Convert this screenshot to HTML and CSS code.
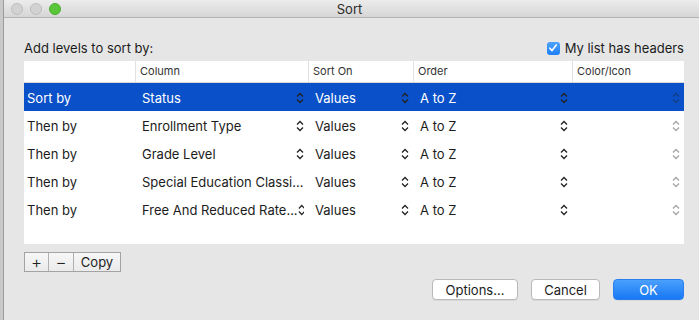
FILE: index.html
```html
<!DOCTYPE html>
<html lang="en">
<head>
  <meta charset="UTF-8" />
  <title>Sort</title>
  <link rel="stylesheet" href="styles.css">
</head>
<body>
  <div class="desk">
    <div class="sheet-edge"></div>
    <div class="window">
      <div class="titlebar">
        <div class="lights">
          <span class="light"></span>
          <span class="light"></span>
          <span class="light green"></span>
        </div>
        <div class="title">Sort</div>
      </div>

      <div class="content">
        <div class="top-row">
          <span>Add levels to sort by:</span>
          <label class="check">
            <span class="box">
              <svg width="10" height="10" viewBox="0 0 10 10"><path d="M1.8 5.2 L4 7.6 L8.3 2" fill="none" stroke="#fff" stroke-width="1.6" stroke-linecap="round" stroke-linejoin="round"/></svg>
            </span>
            My list has headers
          </label>
        </div>

        <div class="table">
          <div class="row head">
            <div class="cell"></div>
            <div class="cell sep">Column</div>
            <div class="cell sep">Sort On</div>
            <div class="cell sep">Order</div>
            <div class="cell sep">Color/Icon</div>
          </div>

          <div class="row selected">
            <div class="cell first">Sort by</div>
            <div class="cell">Status<i class="updown"></i></div>
            <div class="cell">Values<i class="updown"></i></div>
            <div class="cell">A to Z<i class="updown"></i></div>
            <div class="cell"><i class="updown dim"></i></div>
          </div>
          <div class="row">
            <div class="cell first">Then by</div>
            <div class="cell">Enrollment Type<i class="updown"></i></div>
            <div class="cell">Values<i class="updown"></i></div>
            <div class="cell">A to Z<i class="updown"></i></div>
            <div class="cell"><i class="updown dim"></i></div>
          </div>
          <div class="row">
            <div class="cell first">Then by</div>
            <div class="cell">Grade Level<i class="updown"></i></div>
            <div class="cell">Values<i class="updown"></i></div>
            <div class="cell">A to Z<i class="updown"></i></div>
            <div class="cell"><i class="updown dim"></i></div>
          </div>
          <div class="row">
            <div class="cell first">Then by</div>
            <div class="cell">Special Education Classi...<i class="updown"></i></div>
            <div class="cell">Values<i class="updown"></i></div>
            <div class="cell">A to Z<i class="updown"></i></div>
            <div class="cell"><i class="updown dim"></i></div>
          </div>
          <div class="row">
            <div class="cell first">Then by</div>
            <div class="cell">Free And Reduced Rate...<i class="updown"></i></div>
            <div class="cell">Values<i class="updown"></i></div>
            <div class="cell">A to Z<i class="updown"></i></div>
            <div class="cell"><i class="updown dim"></i></div>
          </div>
        </div>

        <div class="tools">
          <button class="tool plus">+</button>
          <button class="tool minus">−</button>
          <button class="tool copy">Copy</button>
        </div>

        <div class="actions">
          <button class="btn options">Options...</button>
          <button class="btn cancel">Cancel</button>
          <button class="btn primary">OK</button>
        </div>
      </div>
    </div>
  </div>
</body>
</html>
```

FILE: styles.css
```css
body {
  margin: 0;
  font-family: Inter, "Liberation Sans", sans-serif;
  font-size: 13px;
  color: #1c1c1c;
  background: #e6e6e6;
}
.desk {
  display: flex;
  height: 320px;
  overflow: hidden;
}
.sheet-edge {
  width: 3px;
  background: #c9c9c9;
  border-right: 1px solid #9c9c9c;
}
.window {
  flex: 1;
  display: flex;
  flex-direction: column;
  background: #e6e6e6;
}
.titlebar {
  height: 17px;
  position: relative;
  background: linear-gradient(#ececec, #d6d6d6);
  border-bottom: 1px solid #b3b3b3;
  display: flex;
  align-items: center;
  justify-content: center;
}
.lights {
  position: absolute;
  left: 7px;
  top: 3px;
  display: flex;
  gap: 7px;
}
.light {
  width: 10px;
  height: 10px;
  border-radius: 50%;
  background: #d2d2d2;
  border: 1px solid #bdbdbd;
}
.light.green {
  background: #5ac73a;
  border-color: #4aae2c;
}
.title {
  font-size: 13px;
  color: #2a2a2a;
  margin-left: -4px;
}
.content {
  padding: 0 15px 0 20px;
}
.top-row {
  display: flex;
  justify-content: space-between;
  align-items: center;
  height: 24px;
  margin-top: 18px;
}
.check {
  display: flex;
  align-items: center;
  gap: 5px;
}
.box {
  width: 13px;
  height: 13px;
  border-radius: 3px;
  background: linear-gradient(#4ea2fb, #1d7ef6);
  display: flex;
  align-items: center;
  justify-content: center;
}
.table {
  margin-top: 1px;
  height: 183px;
  background: #fff;
}
.row {
  display: grid;
  grid-template-columns: 111px 173px 105px 159px 1fr;
  height: 28px;
  align-items: center;
}
.row.head {
  height: 21px;
  border-bottom: 1px solid #d8d8d8;
  font-size: 11px;
  color: #333;
}
.head .cell {
  height: 21px;
  line-height: 21px;
  padding-top: 0;
}
.head .sep {
  border-left: 1px solid #e2e2e2;
  padding-left: 4px;
}
.row.selected {
  background: #0a51c9;
  color: #fff;
}
.cell {
  display: flex;
  align-items: center;
  padding-left: 7px;
  padding-right: 4px;
  padding-top: 2px;
  white-space: nowrap;
  overflow: hidden;
}
.cell.first {
  padding-left: 3px;
}
.updown {
  margin-left: auto;
  width: 8px;
  height: 12px;
  background: url("data:image/svg+xml,%3Csvg xmlns='http://www.w3.org/2000/svg' width='8' height='12'%3E%3Cpath d='M1 4.5 L4 1.5 L7 4.5 M1 7.5 L4 10.5 L7 7.5' fill='none' stroke='%23222' stroke-width='1.3'/%3E%3C/svg%3E") no-repeat;
}
.updown.dim {
  opacity: 0.4;
}
.tools {
  display: flex;
  margin-top: 8px;
  width: 95px;
  border: 1px solid #a3a3a3;
  height: 18px;
  background: linear-gradient(#f7f7f7, #ebebeb);
}
.tool {
  font-family: inherit;
  border: none;
  background: none;
  padding: 0;
  font-size: 13px;
  color: #222;
  line-height: 18px;
  cursor: pointer;
}
.plus { width: 24px; border-right: 1px solid #b0b0b0; font-size: 17px; font-weight: 300; }
.minus { width: 25px; border-right: 1px solid #b0b0b0; font-size: 17px; font-weight: 300; }
.copy { flex: 1; }
.actions {
  display: flex;
  justify-content: flex-end;
  gap: 13px;
  margin-top: 7px;
}
.btn {
  font-family: inherit;
  font-size: 13px;
  height: 21px;
  border-radius: 4px;
  border: 1px solid #b9b9b9;
  background: #fff;
  color: #1c1c1c;
  box-shadow: 0 1px 0 rgba(0, 0, 0, 0.06);
  cursor: pointer;
  padding: 0;
}
.options { width: 86px; }
.cancel { width: 69px; }
.btn.primary {
  width: 71px;
  color: #fff;
  border-color: #2a7ef0;
  background: linear-gradient(#4aa0fc, #1878f5);
}
```
